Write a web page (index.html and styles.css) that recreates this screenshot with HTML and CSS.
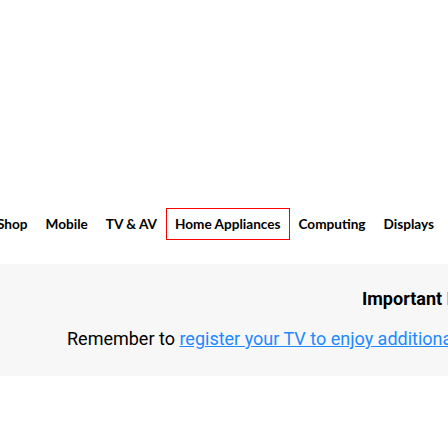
FILE: index.html
```html
<!DOCTYPE html>
<html>
<head>
<meta charset="utf-8">
<link rel="stylesheet" href="styles.css">
</head>
<body>
<div class="page">
  <nav class="nav">
    <a class="nav-item">Shop</a>
    <a class="nav-item">Mobile</a>
    <a class="nav-item">TV &amp; AV</a>
    <a class="nav-item active">Home Appliances</a>
    <a class="nav-item">Computing</a>
    <a class="nav-item">Displays</a>
  </nav>
  <section class="notice">
    <h2 class="notice-title">Important Information</h2>
    <p class="notice-text">Remember to <a class="notice-link">register your TV to enjoy additional benefits</a></p>
  </section>
</div>
</body>
</html>
```
FILE: styles.css
```css
html, body {
  margin: 0;
  padding: 0;
  background: #fff;
  overflow: hidden;
}
.page {
  width: 448px;
  height: 448px;
  overflow: hidden;
  font-family: Roboto, "Noto Sans", sans-serif;
  color: #000;
}
.nav {
  display: flex;
  align-items: center;
  white-space: nowrap;
  margin-top: 208px;
  margin-left: -12px;
  height: 32px;
}
.nav-item {
  display: block;
  padding: 0 8px;
  font-family: Lato, Roboto, sans-serif;
  font-size: 13.6px;
  font-weight: 700;
  line-height: 30px;
  border: 1px solid transparent;
  color: #000;
}
.active {
  border-color: #f00;
}
.notice {
  margin-top: 24px;
  height: 112px;
  background: #f7f7f7;
  white-space: nowrap;
  box-sizing: border-box;
  padding-top: 22px;
}
.notice-title {
  margin: 0;
  padding-left: 362px;
  font-size: 18px;
  font-weight: 700;
  line-height: 26px;
}
.notice-text {
  margin: 14px 0 0;
  padding-left: 67px;
  font-size: 18px;
  font-weight: 400;
  line-height: 26px;
}
.notice-link {
  color: #2189ff;
  text-decoration: underline;
}
```
